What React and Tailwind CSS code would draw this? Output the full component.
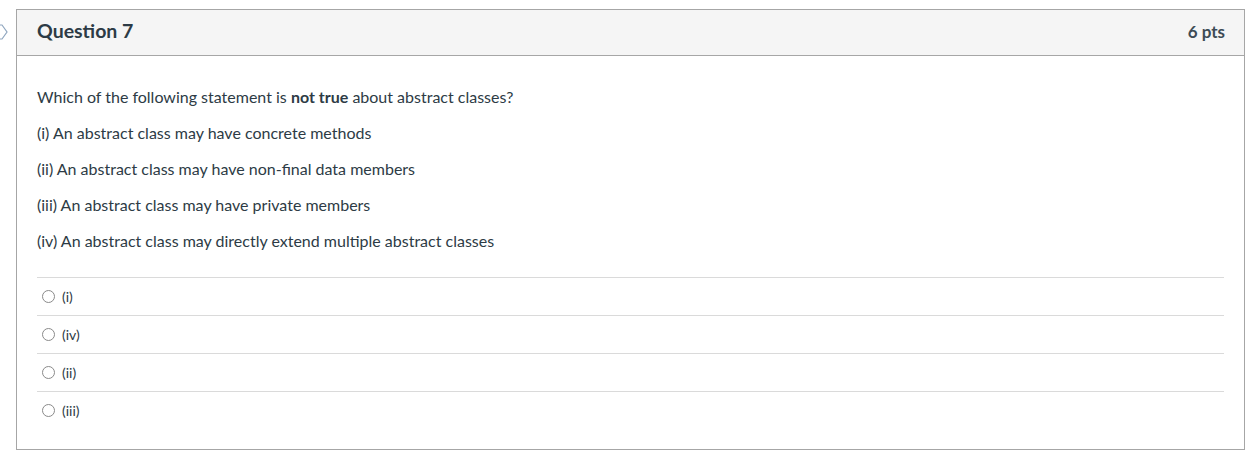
export default function App() {
  const answers = ['(i)', '(iv)', '(ii)', '(iii)'];
  return (
    <div
      className="w-[1259px] h-[462px] bg-white relative"
      style={{ fontFamily: 'Lato, "Noto Sans", sans-serif' }}
    >
      {/* flag marker, mostly off-screen */}
      <svg className="absolute left-[-10px] top-[22px]" width="20" height="20" viewBox="0 0 20 20" fill="none">
        <path d="M1 3 H12 L17 10 L12 17 H1 Z" stroke="#8fa6bf" strokeWidth="1.2" />
      </svg>
      <div className="pt-[9px] pl-[16px] w-[1245px]">
        <div className="border border-[#a6a6a6] h-[441px]">
          <div className="h-[46px] bg-[#f5f5f5] border-b border-[#a6a6a6] flex items-center justify-between pl-[20px] pr-[19px]">
            <span className="text-[19.5px] font-bold text-[#2d3b45] pb-[3px]">Question 7</span>
            <span className="text-[17px] font-bold text-[#3d4b55] pb-[1px]">6 pts</span>
          </div>
          <div className="px-[20px] pt-[31px] text-[#2d3b45]">
            <div className="text-[16px] leading-[20px] flex flex-col gap-[16px]">
              <p>
                Which of the following statement is <b>not true</b> about abstract classes?
              </p>
              <p>(i) An abstract class may have concrete methods</p>
              <p>(ii) An abstract class may have non-final data members</p>
              <p>(iii) An abstract class may have private members</p>
              <p>(iv) An abstract class may directly extend multiple abstract classes</p>
            </div>
            <div className="mt-[26px]">
              {answers.map((a) => (
                <div key={a} className="border-t border-[#dadada] h-[38px] flex items-center pl-[5px]">
                  <span className="w-[13px] h-[13px] rounded-full border border-[#8a8a8a] bg-white"></span>
                  <span className="ml-[7px] text-[14px] text-[#2d3b45]">{a}</span>
                </div>
              ))}
            </div>
          </div>
        </div>
      </div>
    </div>
  );
}
